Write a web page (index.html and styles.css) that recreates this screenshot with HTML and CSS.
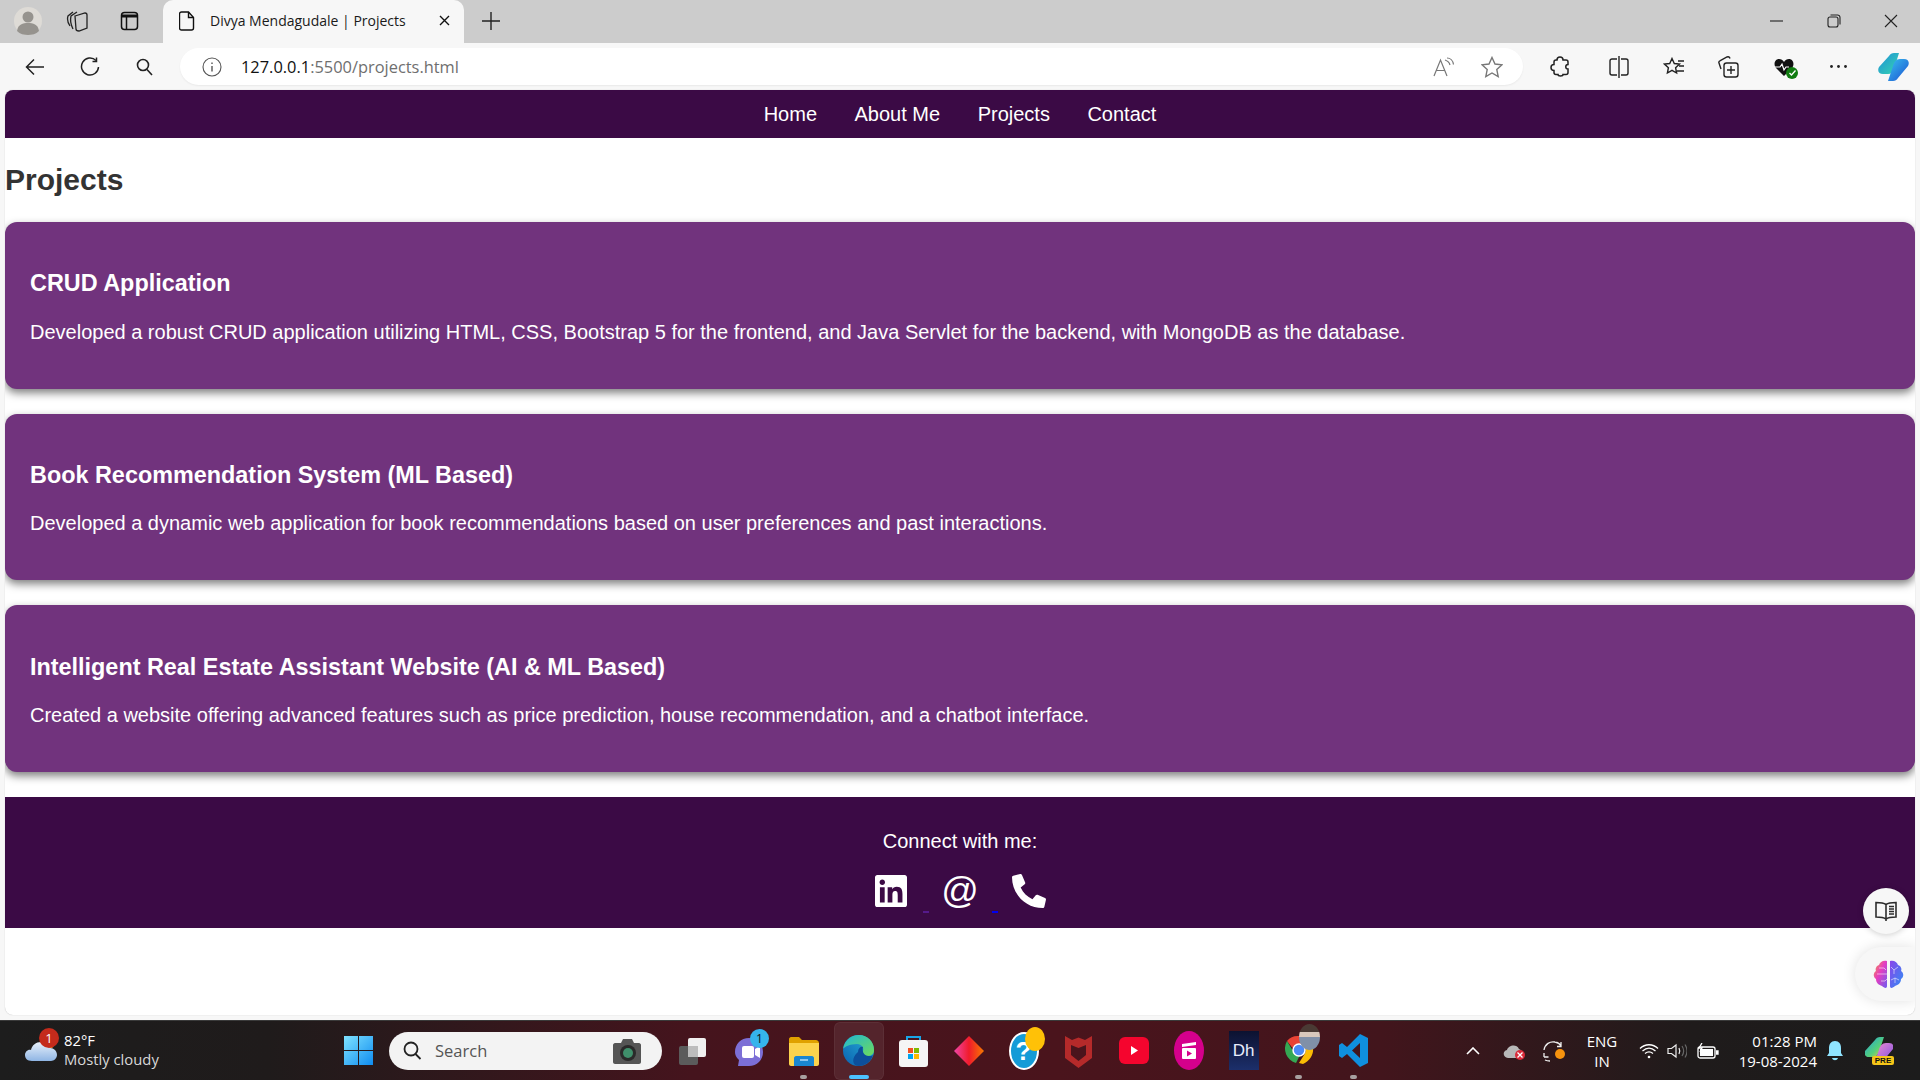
FILE: index.html
```html
<!DOCTYPE html>
<html lang="en">
<head>
  <meta charset="UTF-8">
  <meta name="viewport" content="width=device-width, initial-scale=1.0">
  <title>Divya Mendagudale | Projects</title>
  <link rel="stylesheet" href="styles.css">
</head>
<body>
  <!-- browser tab strip -->
  <div class="tabstrip">
    <span class="strip-icon profile">
      <svg width="28" height="28" viewBox="0 0 28 28"><circle cx="14" cy="14" r="14" fill="#dedbd6"/><circle cx="14" cy="10" r="5.5" fill="#96938e"/><path d="M3 24c1-7 6-8 11-8s10 1 11 8c-3 3-7 4-11 4s-8-1-11-4z" fill="#96938e"/></svg>
    </span>
    <span class="strip-icon collections">
      <svg width="22" height="24" viewBox="0 0 22 24" fill="none" stroke="#222" stroke-width="1.3"><path d="M4 17C2 14 1 10 2 7l5-4"/><path d="M7 20C5 16 4 11 5 7l6-4"/><path d="M9 7l10-3c1 0 2 1 2 2v13l-8 3c-2 0-3-1-3-2z"/></svg>
    </span>
    <span class="strip-icon vtabs">
      <svg width="20" height="20" viewBox="0 0 20 20" fill="none" stroke="#111" stroke-width="1.5"><rect x="1.5" y="1.5" width="16" height="17" rx="3"/><path d="M1.5 5h16" stroke-width="3"/><path d="M6.5 6v12"/></svg>
    </span>
    <div class="tab">
      <svg width="16" height="20" viewBox="0 0 16 20" fill="none" stroke="#111" stroke-width="1.4"><path d="M2.5 1h7l5 5.5V17a2 2 0 0 1-2 2h-10a2 2 0 0 1-2-2V3a2 2 0 0 1 2-2z"/><path d="M9.5 1v5.5h5"/></svg>
      <span class="tab-title">Divya Mendagudale | Projects</span>
      <svg class="tab-close" width="11" height="11" viewBox="0 0 11 11" stroke="#111" stroke-width="1.4"><path d="M1 1l9 9M10 1l-9 9"/></svg>
    </div>
    <svg class="new-tab" width="18" height="18" viewBox="0 0 18 18" stroke="#222" stroke-width="1.4"><path d="M9 0v18M0 9h18"/></svg>
    <div class="window-btns">
      <svg width="14" height="14" viewBox="0 0 14 14" stroke="#222" stroke-width="1.1"><path d="M0 7h13"/></svg>
      <svg width="14" height="14" viewBox="0 0 14 14" fill="none" stroke="#222" stroke-width="1.1"><rect x="1" y="3" width="10" height="10" rx="2"/><path d="M3.500 1h7a2.500 2.500 0 0 1 2.500 2.500v7"/></svg>
      <svg width="14" height="14" viewBox="0 0 14 14" stroke="#222" stroke-width="1.1"><path d="M1 1l12 12M13 1L1 13"/></svg>
    </div>
  </div>

  <!-- browser toolbar -->
  <div class="toolbar">
    <span class="tool">
      <svg width="20" height="18" viewBox="0 0 20 18" fill="none" stroke="#222" stroke-width="1.5"><path d="M19 9H2M9 1.500L1.500 9 9 16.500"/></svg>
    </span>
    <span class="tool">
      <svg width="20" height="20" viewBox="0 0 20 20" fill="none" stroke="#222" stroke-width="1.5"><path d="M16 3.500A8.500 8.500 0 1 0 18.500 10"/><path d="M16.500 0.500v4h-4"/></svg>
    </span>
    <span class="tool">
      <svg width="17" height="18" viewBox="0 0 17 18" fill="none" stroke="#222" stroke-width="1.6"><circle cx="7" cy="7" r="5.500"/><path d="M11 11.500l5 5.500"/></svg>
    </span>
    <div class="address">
      <svg width="20" height="20" viewBox="0 0 20 20" fill="none" stroke="#555" stroke-width="1.1"><circle cx="10" cy="10" r="9"/><path d="M10 9v5.500M10 5.500v1.500" stroke-width="1.400"/></svg>
      <span class="url"><b>127.0.0.1</b>:5500/projects.html</span>
      <svg class="read-aloud" width="24" height="20" viewBox="0 0 24 20" fill="none" stroke="#777" stroke-width="1.2"><path d="M2 19L8.500 3 15 19M4.500 13.500h8"/><path d="M13 3c3 1 4.500 3 5 5M15 1c3.500 0 6 3 6.500 6.500"/></svg>
      <svg class="addr-star" width="22" height="22" viewBox="0 0 22 22" fill="none" stroke="#777" stroke-width="1.4"><path d="M11 1.500l3 6.500 7 .8-5.200 4.800 1.400 7L11 17l-6.200 3.600 1.400-7L1 8.800 8 8z"/></svg>
    </div>
    <span class="tool">
      <svg width="20" height="21" viewBox="0 0 20 21" fill="none" stroke="#222" stroke-width="1.5"><path d="M7 4c0-4 6-4 6 0h3a2 2 0 0 1 2 2v2.500c-3 0-3 4.500 0 4.500v3.500a2 2 0 0 1-2 2h-3c0 2-5 2-5 0H6a2 2 0 0 1-2-2v-2c-4 0-4-6 0-6V6a2 2 0 0 1 2-2z"/></svg>
    </span>
    <span class="tool-sep"></span>
    <span class="tool">
      <svg width="20" height="22" viewBox="0 0 20 22" fill="none" stroke="#222" stroke-width="1.400"><path d="M8 3H3a2 2 0 0 0-2 2v12a2 2 0 0 0 2 2h5M12 3h5a2 2 0 0 1 2 2v12a2 2 0 0 1-2 2h-5M10 0v22"/></svg>
    </span>
    <span class="tool">
      <svg width="22" height="20" viewBox="0 0 22 20" fill="none" stroke="#222" stroke-width="1.400"><path d="M9 1.500l2.300 5 5.200.6-3.900 3.600 1 5.300L9 13.400 4.400 16l1-5.300L1.500 7.100l5.200-.6z"/><path d="M15 4h6M16 9h5M14 14h7"/></svg>
    </span>
    <span class="tool">
      <svg width="21" height="22" viewBox="0 0 21 22" fill="none" stroke="#222" stroke-width="1.400"><path d="M3 13L1 7c-.4-1 .3-2 1.300-2.400L9 1c1.500-.5 2.500 0 3 1.500"/><rect x="6" y="7" width="14" height="14" rx="2.500"/><path d="M13 10v8M9 14h8"/></svg>
    </span>
    <span class="tool badge-wrap">
      <svg width="20" height="18" viewBox="0 0 20 18"><path d="M10 18L2 10C-1 6 1 1 5 1c2 0 4 1 5 3 1-2 3-3 5-3 4 0 6 5 3 9z" fill="#111"/><path d="M1 9h5l2-3 2 6 2-3h3" fill="none" stroke="#fff" stroke-width="1.200"/></svg>
      <span class="heart-check"><svg width="7" height="6" viewBox="0 0 7 6" fill="none" stroke="#fff" stroke-width="1.300"><path d="M.5 3l2 2L6.500.5"/></svg></span>
    </span>
    <span class="tool">
      <svg width="17" height="3" viewBox="0 0 17 3" fill="#222"><circle cx="1.500" cy="1.500" r="1.400"/><circle cx="8.500" cy="1.500" r="1.400"/><circle cx="15.500" cy="1.500" r="1.400"/></svg>
    </span>
    <span class="tool">
      <svg width="31" height="28" viewBox="0 0 31 28">
        <defs>
          <linearGradient id="cop1" x1="0" y1="0" x2="1" y2="1"><stop offset="0" stop-color="#1f8fd8"/><stop offset="1" stop-color="#36d6b0"/></linearGradient>
          <linearGradient id="cop2" x1="0" y1="0" x2="1" y2="1"><stop offset="0" stop-color="#39c2f0"/><stop offset="1" stop-color="#1b4fd1"/></linearGradient>
        </defs>
        <path d="M11 3c1-2 3-3 5-3h5l-5 16c-1 3-3 5-6 5H5c-4 0-6-3-4-7z" fill="url(#cop1)"/>
        <path d="M20 25c-1 2-3 3-5 3h-5l5-15c1-4 3-7 7-7h4c4 0 6 3 4 7z" fill="url(#cop2)"/>
      </svg>
    </span>
  </div>

  <!-- page inside the browser -->
  <div class="viewport">
    <nav class="site-nav">
      <a href="#">Home</a>
      <a href="#">About Me</a>
      <a href="#">Projects</a>
      <a href="#">Contact</a>
    </nav>

    <main class="projects">
      <h2>Projects</h2>
      <section class="project-card">
        <h3>CRUD Application</h3>
        <p>Developed a robust CRUD application utilizing HTML, CSS, Bootstrap 5 for the frontend, and Java Servlet for the backend, with MongoDB as the database.</p>
      </section>
      <section class="project-card">
        <h3>Book Recommendation System (ML Based)</h3>
        <p>Developed a dynamic web application for book recommendations based on user preferences and past interactions.</p>
      </section>
      <section class="project-card">
        <h3>Intelligent Real Estate Assistant Website (AI &amp; ML Based)</h3>
        <p>Created a website offering advanced features such as price prediction, house recommendation, and a chatbot interface.</p>
      </section>
    </main>

    <footer class="site-footer">
      <p>Connect with me:</p>
      <div class="socials">
        <a href="#" class="social">
          <svg width="32" height="32" viewBox="0 32 448 448" fill="#fff"><path d="M416 32H31.900C14.300 32 0 46.500 0 64.300v383.400C0 465.500 14.300 480 31.900 480H416c17.600 0 32-14.500 32-32.300V64.300c0-17.800-14.400-32.300-32-32.300zM135.400 416H69V202.200h66.500V416zm-33.200-243c-21.300 0-38.500-17.300-38.500-38.500S80.900 96 102.200 96c21.200 0 38.500 17.300 38.500 38.500 0 21.300-17.200 38.500-38.500 38.500zm282.100 243h-66.400V312c0-24.800-.5-56.700-34.500-56.700-34.600 0-39.900 27-39.900 54.900V416h-66.400V202.200h63.700v29.200h.9c8.900-16.800 30.600-34.500 62.900-34.500 67.200 0 79.700 44.300 79.700 101.900V416z"/></svg>
        </a>
        <span class="link-gap visited"></span>
        <a href="#" class="social social-at">@</a>
        <span class="link-gap"></span>
        <a href="#" class="social">
          <svg class="phone" width="34" height="34" viewBox="0 0 512 512" fill="#fff"><path d="M493.400 24.600l-104-24c-11.300-2.600-22.900 3.300-27.500 13.900l-48 112c-4.200 9.800-1.400 21.300 6.900 28l60.600 49.600c-36 76.700-98.900 140.500-177.200 177.200l-49.600-60.600c-6.800-8.300-18.200-11.100-28-6.900l-112 48C3.900 366.500-2 378.100.6 389.400l24 104C27.100 504.200 36.700 512 48 512c256.100 0 464-207.500 464-464 0-11.200-7.700-20.900-18.600-23.400z"/></svg>
        </a>
      </div>
    </footer>

    <!-- edge side buttons that float over the page -->
    <span class="float-book">
      <svg width="22" height="20" viewBox="0 0 22 20" fill="none" stroke="#2c2c2c" stroke-width="1.600"><path d="M11 3.500C9 2 5 1.500 1 1.500v14.500c4 0 8 .5 10 2 2-1.500 6-2 10-2V1.500c-4 0-8 .5-10 2zM11 3.500V20"/><path d="M14 5.500h5M14 8h5M14 10.500h5M14 13h5" stroke-width="1.400"/></svg>
    </span>
    <span class="float-brain">
      <svg width="31" height="29" viewBox="0 0 31 29">
        <defs>
          <linearGradient id="brainL" x1="0" y1="0" x2="1" y2="1"><stop offset="0" stop-color="#f59a3c"/><stop offset=".45" stop-color="#e63dc0"/><stop offset="1" stop-color="#6d5cf0"/></linearGradient>
          <linearGradient id="brainR" x1="0" y1="0" x2="1" y2="1"><stop offset="0" stop-color="#8a45ea"/><stop offset="1" stop-color="#2f8ff5"/></linearGradient>
        </defs>
        <path d="M14 1c-4-1-7 1-8 4-3 1-4 4-3 6-3 2-3 6 0 8 0 4 3 6 6 7 2 2 5 3 5 0z" fill="url(#brainL)"/>
        <path d="M17 1c4-1 7 1 8 4 3 1 4 4 3 6 3 2 3 6 0 8 0 4-3 6-6 7-2 2-5 3-5 0z" fill="url(#brainR)"/>
        <path d="M4 14h10M6 8h5l2 2M8 21h4l2-2M18 7l3 3 4-3M21 10v4M18 20l4-2 4 2M22 18v5" fill="none" stroke="#fff" stroke-opacity=".55" stroke-width="1"/>
      </svg>
    </span>
  </div>

  <!-- windows taskbar -->
  <div class="taskbar">
    <div class="weather">
      <span class="weather-icon">
        <svg width="32" height="24" viewBox="0 0 32 24"><defs><linearGradient id="cloud" x1="0" y1="0" x2="0" y2="1"><stop offset="0" stop-color="#e8f1fb"/><stop offset="1" stop-color="#8fb5e4"/></linearGradient></defs><circle cx="24" cy="6" r="5" fill="#f08a24"/><path d="M7 23C2 23 0 20 0 17c0-3 3-6 6-5 1-5 5-8 10-8s8 3 9 6c4 0 7 3 7 7 0 3-3 6-6 6z" fill="url(#cloud)"/></svg>
        <span class="weather-badge">1</span>
      </span>
      <div class="weather-text">
        <span>82°F</span>
        <span class="weather-sub">Mostly cloudy</span>
      </div>
    </div>

    <span class="task-icon start">
      <svg width="29" height="29" viewBox="0 0 29 29"><defs><linearGradient id="win" x1="0" y1="0" x2="1" y2="1"><stop offset="0" stop-color="#7fe3ff"/><stop offset="1" stop-color="#0f8cf0"/></linearGradient></defs><path d="M0 0h14v14H0zM15 0h14v14H15zM0 15h14v14H0zM15 15h14v14H15z" fill="url(#win)"/></svg>
    </span>

    <div class="search-box">
      <svg width="19" height="19" viewBox="0 0 19 19" fill="none" stroke="#222" stroke-width="1.800"><circle cx="8" cy="8" r="6.500"/><path d="M12.500 13l5 5"/></svg>
      <span class="search-label">Search</span>
      <svg class="search-cam" width="30" height="28" viewBox="0 0 30 28"><path d="M3 6h6l2-4h9l2 4h5c1 0 2 1 2 2v17c0 1-1 2-2 2H3c-1 0-2-1-2-2V8c0-1 1-2 2-2z" fill="#555"/><circle cx="16" cy="16" r="8" fill="#2a2a2a"/><circle cx="16" cy="16" r="5" fill="#3f8f6b"/></svg>
    </div>

    <div class="task-icons">
      <span class="task-icon">
        <svg width="29" height="29" viewBox="0 0 29 29"><rect y="10" width="19" height="19" rx="2" fill="#5b5b5b"/><rect x="9" y="2" width="18" height="19" rx="2" fill="#f0f0f0"/><rect x="9" y="10" width="10" height="11" fill="#bcbcbc"/></svg>
      </span>
      <span class="task-icon">
        <svg width="30" height="38" viewBox="0 0 30 38"><path d="M15 6c8 0 14 6 14 14s-6 14-14 14H4l1-6C2 25 1 23 1 20 1 12 7 6 15 6z" fill="#7c6fd6"/><rect x="8" y="14" width="12" height="12" rx="2" fill="#fff"/><path d="M21 17l5-3v12l-5-3z" fill="#fff"/></svg>
        <span class="teams-badge">1</span>
      </span>
      <span class="task-icon has-dot">
        <svg width="30" height="30" viewBox="0 0 30 30"><path d="M0 3c0-1 1-2 2-2h8l3 3h14c1 0 3 1 3 3v3H0z" fill="#e0a100"/><path d="M0 7h30v21c0 1-1 2-2 2H2c-1 0-2-1-2-2z" fill="#fcd34d"/><path d="M7 20h16c1 0 2 1 2 2v8H5v-8c0-1 1-2 2-2z" fill="#1a86d0"/><path d="M11 24h8" stroke="#bfe3fb" stroke-width="1.400"/></svg>
      </span>
      <span class="task-icon active">
        <svg width="31" height="33" viewBox="0 0 31 33"><defs><linearGradient id="edgeA" x1="0" y1="1" x2="1" y2="0"><stop offset="0" stop-color="#0b5fb0"/><stop offset="1" stop-color="#27b4d8"/></linearGradient><linearGradient id="edgeB" x1="0" y1="0" x2="1" y2="1"><stop offset="0" stop-color="#1fb6d6"/><stop offset="1" stop-color="#6fdc5a"/></linearGradient></defs><circle cx="15.500" cy="16.500" r="15.500" fill="url(#edgeA)"/><path d="M0 15C2 5 9 1 16 1c9 0 15 7 15 15 0 4-3 6-7 6-5 0-5-3-4-5 1-3-1-7-6-7-7 0-13 3-14 5z" fill="url(#edgeB)"/><path d="M15 18c0-4 3-6 5-5-1 3 0 9 6 9 1 0 3 0 4-1-2 7-8 11-14 11-7 0-8-8-1-14z" fill="#0c4f9c"/></svg>
        <span class="edge-line"></span>
      </span>
      <span class="task-icon">
        <svg width="29" height="33" viewBox="0 0 29 33"><path d="M8 8V3h13v5" fill="none" stroke="#19a5e6" stroke-width="2"/><rect y="6" width="29" height="27" rx="3" fill="#f5f5f5"/><path d="M9 14h5v5H9z" fill="#f25022"/><path d="M15 14h5v5h-5z" fill="#7fba00"/><path d="M9 20h5v5H9z" fill="#00a4ef"/><path d="M15 20h5v5h-5z" fill="#ffb900"/></svg>
      </span>
      <span class="task-icon">
        <svg width="30" height="30" viewBox="0 0 30 30"><defs><linearGradient id="gem" x1="0" y1="0" x2="1" y2="0"><stop offset="0" stop-color="#ef46a8"/><stop offset=".5" stop-color="#f01b2b"/><stop offset="1" stop-color="#f77a00"/></linearGradient></defs><path d="M15 0l15 15-15 15L0 15z" fill="url(#gem)"/></svg>
      </span>
      <span class="task-icon">
        <span class="help-icon">?</span>
        <span class="help-dot"></span>
      </span>
      <span class="task-icon">
        <svg width="27" height="34" viewBox="0 0 27 34"><path d="M0 2l7 4 6.500-2.500L20 6l7-4v22l-13.500 10L0 24z" fill="#b52a2a"/><path d="M6 11l7.500 3 7.500-3v10l-7.500 6L6 21z" fill="#4a141c"/></svg>
      </span>
      <span class="task-icon">
        <svg width="30" height="27" viewBox="0 0 30 27"><rect width="30" height="27" rx="6" fill="#f5052e"/><path d="M12 9l7 4.500-7 4.500z" fill="#fff"/></svg>
      </span>
      <span class="task-icon">
        <svg width="30" height="39" viewBox="0 0 30 39"><ellipse cx="15" cy="19.500" rx="15" ry="19.500" fill="#d5008c"/><rect x="8" y="17" width="14" height="11" rx="1" fill="#fff"/><path d="M8 13l14-2v3L8 16z" fill="#fff"/><path d="M13 19.500l5 3-5 3z" fill="#d5008c"/></svg>
      </span>
      <span class="task-icon">
        <span class="dh-icon">Dh</span>
      </span>
      <span class="task-icon has-dot">
        <svg width="30" height="34" viewBox="0 0 30 34"><path d="M15 2a14 14 0 0 1 13 8H15a7 7 0 0 0-6.500 4L3 7A14 14 0 0 1 15 2z" fill="#ea4335"/><path d="M3 7l6 10a7 7 0 0 0 7 4l-4 8A15 15 0 0 1 3 7z" fill="#34a853"/><path d="M28 10c3 7 0 16-9 20l-4-1 5-8a7 7 0 0 0 1-7z" fill="#fbbc05"/><circle cx="15" cy="16" r="6" fill="#4c8bf5" stroke="#fff" stroke-width="1.500"/></svg>
        <span class="chrome-avatar"></span>
      </span>
      <span class="task-icon has-dot">
        <svg width="29" height="33" viewBox="0 0 29 33"><path d="M21 0l8 4v25l-8 4L8 20l-5 4-3-2v-11l3-2 5 4zM21 9l-8 7.500 8 7.500z" fill="#0f8fde"/></svg>
      </span>
    </div>

    <div class="tray">
      <svg class="tray-chevron" width="14" height="8" viewBox="0 0 14 8" fill="none" stroke="#fff" stroke-width="1.600"><path d="M1 7l6-6 6 6"/></svg>
      <span class="tray-cloud">
        <svg width="20" height="14" viewBox="0 0 20 14"><path d="M5 14c-5 0-6-7-1-8 1-4 9-7 12-1 4 1 5 9 0 9z" fill="#b8b8b8"/></svg>
        <span class="tray-x"><svg width="6" height="6" viewBox="0 0 6 6" stroke="#fff" stroke-width="1.300"><path d="M.5 .5l5 5M5.500 .5l-5 5"/></svg></span>
      </span>
      <span class="tray-sync">
        <svg width="24" height="24" viewBox="0 0 24 24" fill="none" stroke="#eee" stroke-width="1.300"><path d="M2 11C3 5 8 2 13 3c3 .5 5 2 6 4M19 3v4.500h-4"/><path d="M2 18h4.500M3 21c2 1 4 1 5 1M2 14v4"/></svg>
        <span class="sync-dot"></span>
      </span>
      <div class="tray-lang"><span>ENG</span><span>IN</span></div>
      <svg class="tray-wifi" width="20" height="16" viewBox="0 0 20 16" fill="none" stroke="#fff" stroke-width="1.300"><path d="M1 5.500c5-5 13-5 18 0M3.500 8c4-3.500 9-3.500 13 0M6 10.500c2.500-2 5.500-2 8 0"/><circle cx="10" cy="14" r="1.300" fill="#fff" stroke="none"/></svg>
      <svg class="tray-vol" width="20" height="18" viewBox="0 0 20 18" fill="none" stroke="#eee" stroke-width="1.200"><path d="M1 6.500h3.500L9 3v12l-4.500-3.500H1z"/><path d="M12 6c1 2 1 4 0 6"/><path d="M15 4c2 3 2 7 0 10M18 2.500c2.500 4 2.500 9 0 13" stroke="#666"/></svg>
      <svg class="tray-batt" width="22" height="16" viewBox="0 0 22 16" fill="none" stroke="#fff" stroke-width="1.300"><rect x="1" y="4" width="17" height="11" rx="2"/><path d="M19 8h2v3h-2" fill="#fff"/><path d="M3 6h13v7H3z" fill="#fff" stroke="none"/><path d="M5 0L2 5h3L3 9" stroke="#fff"/></svg>
      <div class="tray-clock"><span>01:28 PM</span><span>19-08-2024</span></div>
      <svg class="tray-bell" width="16" height="20" viewBox="0 0 16 20"><path d="M8 0c4 0 6 3 6 7v5l2 3H0l2-3V7c0-4 2-7 6-7zM5 17h6c-1 3-5 3-6 0z" fill="#8fe4ff"/></svg>
      <span class="tray-copilot">
        <svg width="28" height="27" viewBox="0 0 28 27"><defs><linearGradient id="copA" x1="0" y1="0" x2="1" y2="1"><stop offset="0" stop-color="#1f9fe0"/><stop offset=".6" stop-color="#54d07a"/><stop offset="1" stop-color="#f5c73c"/></linearGradient><linearGradient id="copB" x1="0" y1="0" x2="1" y2="1"><stop offset="0" stop-color="#f48fd0"/><stop offset="1" stop-color="#7a4ce0"/></linearGradient></defs><path d="M10 3c1-2 3-3 5-3h4l-5 15c-1 3-3 5-6 5H4c-4 0-5-3-4-6z" fill="url(#copA)"/><path d="M18 24c-1 2-3 3-5 3H9l5-14c1-4 3-7 7-7h3c4 0 5 3 4 6z" fill="url(#copB)"/></svg>
        <span class="pre-tag">PRE</span>
      </span>
    </div>
  </div>
</body>
</html>
```

FILE: styles.css
```css
* {
  box-sizing: border-box;
}
html, body {
  margin: 0;
  height: 100%;
}
body {
  width: 1920px;
  height: 1080px;
  overflow: hidden;
  display: flex;
  flex-direction: column;
  background-color: #f7f7f7;
  font-family: "Liberation Sans", Arial, sans-serif;
}
svg {
  display: block;
  flex: none;
}

/* tab strip */
.tabstrip {
  height: 43px;
  flex: none;
  display: flex;
  align-items: center;
  padding-bottom: 2px;
  background-color: #cccccc;
}
.strip-icon {
  display: flex;
}
.profile {
  margin-left: 14px;
}
.collections {
  margin-left: 24px;
}
.vtabs {
  margin-left: 32px;
}
.tab {
  width: 301px;
  height: 43px;
  margin-left: 23px;
  margin-bottom: -2px;
  padding: 0 14px 2px 16px;
  display: flex;
  align-items: center;
  background-color: #f7f7f7;
  border-radius: 10px 10px 0 0;
}
.tab-title {
  margin-left: 15px;
  font-family: "Open Sans", sans-serif;
  font-size: 14px;
  color: #1a1a1a;
  white-space: nowrap;
}
.tab-close {
  margin-left: auto;
}
.new-tab {
  margin-left: 18px;
}
.window-btns {
  margin-left: auto;
  margin-right: 22px;
  display: flex;
  gap: 43px;
}

/* toolbar */
.toolbar {
  height: 47px;
  flex: none;
  display: flex;
  align-items: center;
  padding-left: 7px;
}
.tool {
  width: 55px;
  height: 47px;
  flex: none;
  display: flex;
  align-items: center;
  justify-content: center;
}
.address {
  width: 1343px;
  height: 37px;
  margin: 0 9px 0 8px;
  padding: 0 20px 0 22px;
  flex: none;
  display: flex;
  align-items: center;
  background-color: #fff;
  border-radius: 19px;
  box-shadow: 0 1px 2px rgba(0, 0, 0, 0.06);
}
.url {
  margin-left: 19px;
  font-family: "Open Sans", sans-serif;
  font-size: 16.400px;
  color: #6f6f6f;
}
.url b {
  font-weight: 400;
  color: #111;
}
.read-aloud {
  margin-left: auto;
  margin-right: -3px;
}
.addr-star {
  margin-left: 28px;
}
.tool-sep {
  width: 2px;
  height: 22px;
  margin: 0 2px;
  background-color: #cfcfcf;
}
.badge-wrap {
  position: relative;
}
.heart-check {
  position: absolute;
  left: 30px;
  top: 24px;
  width: 12px;
  height: 12px;
  display: flex;
  align-items: center;
  justify-content: center;
  border-radius: 50%;
  background-color: #107c10;
}

/* the page in the browser */
.viewport {
  position: relative;
  width: 1910px;
  height: 925px;
  margin: 0 5px;
  flex: none;
  background-color: #fff;
  border-radius: 8px;
  overflow: hidden;
  box-shadow: 0 0 1px rgba(0, 0, 0, 0.3);
}
.site-nav {
  height: 48px;
  display: flex;
  justify-content: center;
  align-items: center;
  gap: 37.500px;
  background-color: #3b0a45;
}
.site-nav a {
  color: #fff;
  font-size: 20px;
  text-decoration: none;
}
.projects h2 {
  margin: 0;
  padding-top: 24px;
  height: 84px;
  font-size: 30px;
  line-height: 35px;
  color: #333;
}
.project-card {
  height: 166.700px;
  margin-bottom: 25px;
  padding: 47.200px 25px 0;
  background-color: #71337d;
  border-radius: 12px;
  box-shadow: 0 4px 8px rgba(0, 0, 0, 0.5);
  color: #fff;
}
.project-card h3 {
  margin: 0 0 23.500px;
  font-size: 23.400px;
  line-height: 28px;
}
.project-card p {
  margin: 0;
  font-size: 20px;
  line-height: 23px;
}
.site-footer {
  height: 131px;
  padding-top: 33px;
  background-color: #3b0a45;
  color: #fff;
  text-align: center;
}
.site-footer p {
  margin: 0 0 19px;
  font-size: 20px;
  line-height: 23px;
}
.socials {
  display: flex;
  justify-content: center;
}
.social {
  width: 34px;
  height: 38px;
  display: flex;
  justify-content: center;
  align-items: center;
  color: #fff;
  text-decoration: none;
}
.social-at {
  font-size: 37px;
  line-height: 38px;
}
.phone {
  transform: scaleX(-1);
}
.link-gap {
  width: 6px;
  height: 2px;
  margin: 39px 14px 0 15px;
  background-color: #0000ee;
}
.link-gap.visited {
  background-color: #551a8b;
}
.float-book {
  position: absolute;
  right: 6px;
  top: 798px;
  width: 46px;
  height: 46px;
  display: flex;
  align-items: center;
  justify-content: center;
  background-color: #f7f7f7;
  border-radius: 50%;
  box-shadow: 0 1px 6px rgba(0, 0, 0, 0.2);
}
.float-brain {
  position: absolute;
  right: 0;
  top: 857px;
  width: 60px;
  height: 54px;
  padding-left: 18px;
  display: flex;
  align-items: center;
  background-color: #f7f7f7;
  border-radius: 27px 0 0 27px;
  box-shadow: 0 0 14px rgba(0, 0, 0, 0.12);
}

/* taskbar */
.taskbar {
  height: 60px;
  margin-top: 5px;
  flex: none;
  display: flex;
  align-items: center;
  background: linear-gradient(90deg, #1d1d1d 0%, #1f1b1b 14%, #45141d 36%, #4a141c 55%, #42151c 72%, #1f1b1b 88%, #1c1c1c 100%);
  border-top: 1px solid #3a3a3a;
  color: #fff;
  font-family: "Open Sans", sans-serif;
}
.weather {
  width: 331px;
  padding-left: 25px;
  display: flex;
  align-items: center;
  flex: none;
}
.weather-icon {
  position: relative;
  margin-top: -2px;
  display: flex;
}
.weather-badge {
  position: absolute;
  left: 14px;
  top: -10px;
  width: 20px;
  height: 20px;
  border-radius: 50%;
  background-color: #c42b1c;
  font-size: 13px;
  line-height: 20px;
  text-align: center;
}
.weather-text {
  margin-top: -2px;
  margin-left: 7px;
  display: flex;
  flex-direction: column;
  font-size: 14.800px;
  line-height: 19px;
}
.weather-sub {
  color: #d8d8d8;
}
.task-icon {
  position: relative;
  width: 55px;
  height: 58px;
  flex: none;
  display: flex;
  align-items: center;
  justify-content: center;
}
.search-box {
  width: 273px;
  height: 38px;
  margin-left: 3px;
  padding: 0 20px 0 14px;
  flex: none;
  display: flex;
  align-items: center;
  background-color: #f3f3f3;
  border-radius: 19px;
}
.search-label {
  margin-left: 13px;
  font-size: 16.500px;
  color: #555;
}
.search-cam {
  margin-left: auto;
}
.task-icons {
  margin-left: 4px;
  display: flex;
}
.teams-badge {
  position: absolute;
  left: 29px;
  top: 7px;
  width: 19px;
  height: 19px;
  border-radius: 50%;
  background-color: #35b4ec;
  color: #111;
  font-size: 12px;
  line-height: 19px;
  text-align: center;
}
.has-dot::after {
  content: "";
  position: absolute;
  left: 24px;
  bottom: 1px;
  width: 7px;
  height: 4px;
  border-radius: 2px;
  background-color: #a8a0a0;
}
.active {
  background-color: rgba(255, 255, 255, 0.07);
  border-radius: 6px;
  width: 50px;
  margin: 0 2.500px;
  box-shadow: inset 0 0 0 1px rgba(255, 255, 255, 0.05);
}
.edge-line {
  position: absolute;
  left: 15px;
  bottom: 1px;
  width: 20px;
  height: 4px;
  border-radius: 2px;
  background-color: #4cc2ff;
}
.help-icon {
  width: 30px;
  height: 38px;
  border: 2px solid #fff;
  border-radius: 50%;
  background-color: #149bd7;
  color: #fff;
  font-family: "Liberation Sans", sans-serif;
  font-size: 26px;
  font-weight: 700;
  line-height: 34px;
  text-align: center;
}
.help-dot {
  position: absolute;
  left: 29px;
  top: 5px;
  width: 20px;
  height: 24px;
  border-radius: 50%;
  background-color: #ffc107;
}
.dh-icon {
  width: 30px;
  height: 39px;
  background: linear-gradient(#0c1230, #1c2f6b);
  color: #e8eefc;
  font-family: "Liberation Sans", sans-serif;
  font-size: 17px;
  line-height: 39px;
  text-align: center;
}
.chrome-avatar {
  position: absolute;
  left: 28px;
  top: 2px;
  width: 21px;
  height: 26px;
  border-radius: 50%;
  background: linear-gradient(#4a3a34 0 30%, #d8c8bc 30% 50%, #8090a8 50%);
}
.tray {
  margin-left: 79px;
  flex: 1;
  position: relative;
  height: 58px;
  display: flex;
  align-items: center;
}
.tray-chevron {
  margin-left: 6px;
}
.tray-cloud {
  position: relative;
  margin-left: 23px;
}
.tray-x {
  position: absolute;
  left: 12px;
  top: 6px;
  width: 10px;
  height: 10px;
  display: flex;
  align-items: center;
  justify-content: center;
  border-radius: 50%;
  background-color: #d92b3a;
}
.tray-sync {
  position: relative;
  margin-left: 19px;
}
.sync-dot {
  position: absolute;
  left: 13px;
  top: 10px;
  width: 10px;
  height: 10px;
  border-radius: 50%;
  background-color: #f7930e;
}
.tray-lang {
  width: 40px;
  margin-left: 16px;
  display: flex;
  flex-direction: column;
  align-items: center;
  font-size: 15px;
  line-height: 20px;
}
.tray-wifi {
  margin-left: 17px;
}
.tray-vol {
  margin-left: 8px;
}
.tray-batt {
  margin-left: 10px;
}
.tray-clock {
  width: 88px;
  margin-left: 10px;
  display: flex;
  flex-direction: column;
  align-items: flex-end;
  font-size: 15px;
  line-height: 20px;
  white-space: nowrap;
}
.tray-bell {
  margin-left: 10px;
}
.tray-copilot {
  position: relative;
  margin-left: 22px;
}
.pre-tag {
  position: absolute;
  left: 7px;
  top: 19px;
  width: 22px;
  height: 9px;
  border-radius: 2px;
  background-color: #f5c518;
  color: #111;
  font-family: "Liberation Sans", sans-serif;
  font-size: 8px;
  font-weight: 700;
  line-height: 9px;
  text-align: center;
}
```
